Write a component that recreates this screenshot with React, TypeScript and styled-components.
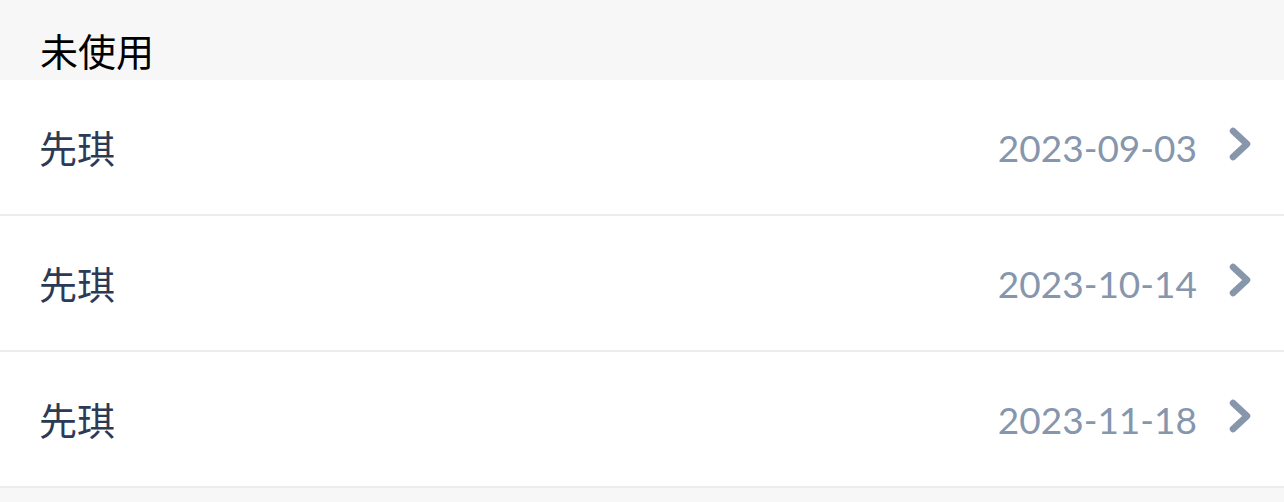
import React from 'react';
import styled, { createGlobalStyle } from 'styled-components';

const GlobalStyle = createGlobalStyle`
  html, body {
    margin: 0;
    padding: 0;
    background: #f7f7f7;
  }
  body {
    font-family: "Noto Sans CJK SC", "Noto Sans", sans-serif;
  }
`;

const Page = styled.div`
  width: 1284px;
  min-height: 502px;
  background: #f7f7f7;
`;

const SectionTitle = styled.div`
  height: 80px;
  display: flex;
  align-items: flex-end;
  padding: 0 40px 11px;
  box-sizing: border-box;
  color: #000;
  font-size: 38px;
  line-height: 1;
`;

const List = styled.div`
  background: #fff;
`;

const Row = styled.div`
  height: 136px;
  box-sizing: border-box;
  display: flex;
  align-items: center;
  padding: 0 31px 0 39px;
  border-bottom: 2px solid #ececee;
`;

const Name = styled.div`
  flex: 1;
  color: #2c3a55;
  font-size: 38px;
  line-height: 1;
`;

const DateText = styled.span`
  font-family: Lato, "Noto Sans", sans-serif;
  color: #8596ad;
  font-size: 37px;
  line-height: 1;
  margin-right: 30px;
`;

const Chevron = styled.svg`
  width: 26px;
  height: 38px;
  flex-shrink: 0;
  margin-top: -6px;
`;

interface Coupon {
  name: string;
  date: string;
}

const coupons: Coupon[] = [
  { name: '先琪', date: '2023-09-03' },
  { name: '先琪', date: '2023-10-14' },
  { name: '先琪', date: '2023-11-18' },
];

const ArrowRight = () => (
  <Chevron viewBox="0 0 26 38">
    <path
      d="M6 6 L20 19 L6 32"
      fill="none"
      stroke="#8796ab"
      strokeWidth="6.5"
      strokeLinecap="round"
      strokeLinejoin="round"
    />
  </Chevron>
);

export default function App() {
  return (
    <Page>
      <GlobalStyle />
      <SectionTitle>未使用</SectionTitle>
      <List>
        {coupons.map((c, i) => (
          <Row key={i}>
            <Name>{c.name}</Name>
            <DateText>{c.date}</DateText>
            <ArrowRight />
          </Row>
        ))}
      </List>
    </Page>
  );
}
